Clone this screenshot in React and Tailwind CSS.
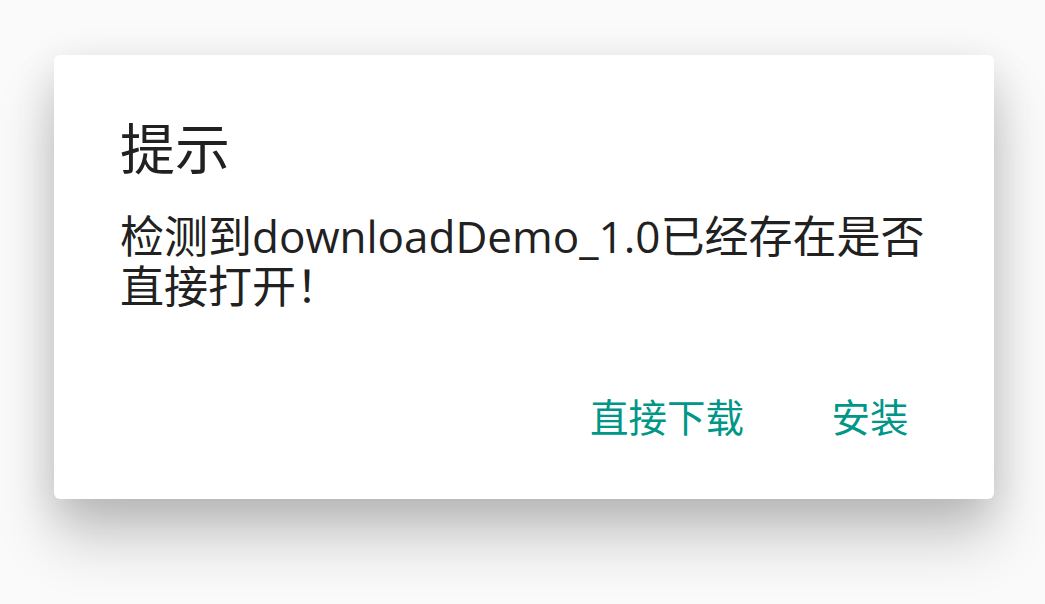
export default function App() {
  return (
    <div className="w-[1045px] h-[604px] bg-[#fafafa] overflow-hidden pt-[55px] pl-[54px]" style={{ fontFamily: '"Open Sans", "Noto Sans CJK SC", sans-serif' }}>
      <div className="w-[940px] h-[444px] bg-white rounded-[6px] shadow-[0_40px_60px_rgba(0,0,0,0.2),0_10px_40px_rgba(0,0,0,0.12)] flex flex-col">
        <div className="px-[66px] pt-[58px]">
          <div className="text-[55px] leading-[70px] text-[#212121]">提示</div>
          <div className="mt-[28px] text-[44px] leading-[50px] text-[#212121]">
            检测到downloadDemo_1.0已经存在是否<br />直接打开！
          </div>
        </div>
        <div className="mt-auto mb-[36px] flex justify-end pr-[36px] gap-[16px]">
          <button className="px-[22px] h-[90px] text-[38.5px] text-[#009688]">直接下载</button>
          <button className="min-w-[176px] h-[90px] text-center text-[38.5px] text-[#009688]">安装</button>
        </div>
      </div>
    </div>
  );
}
